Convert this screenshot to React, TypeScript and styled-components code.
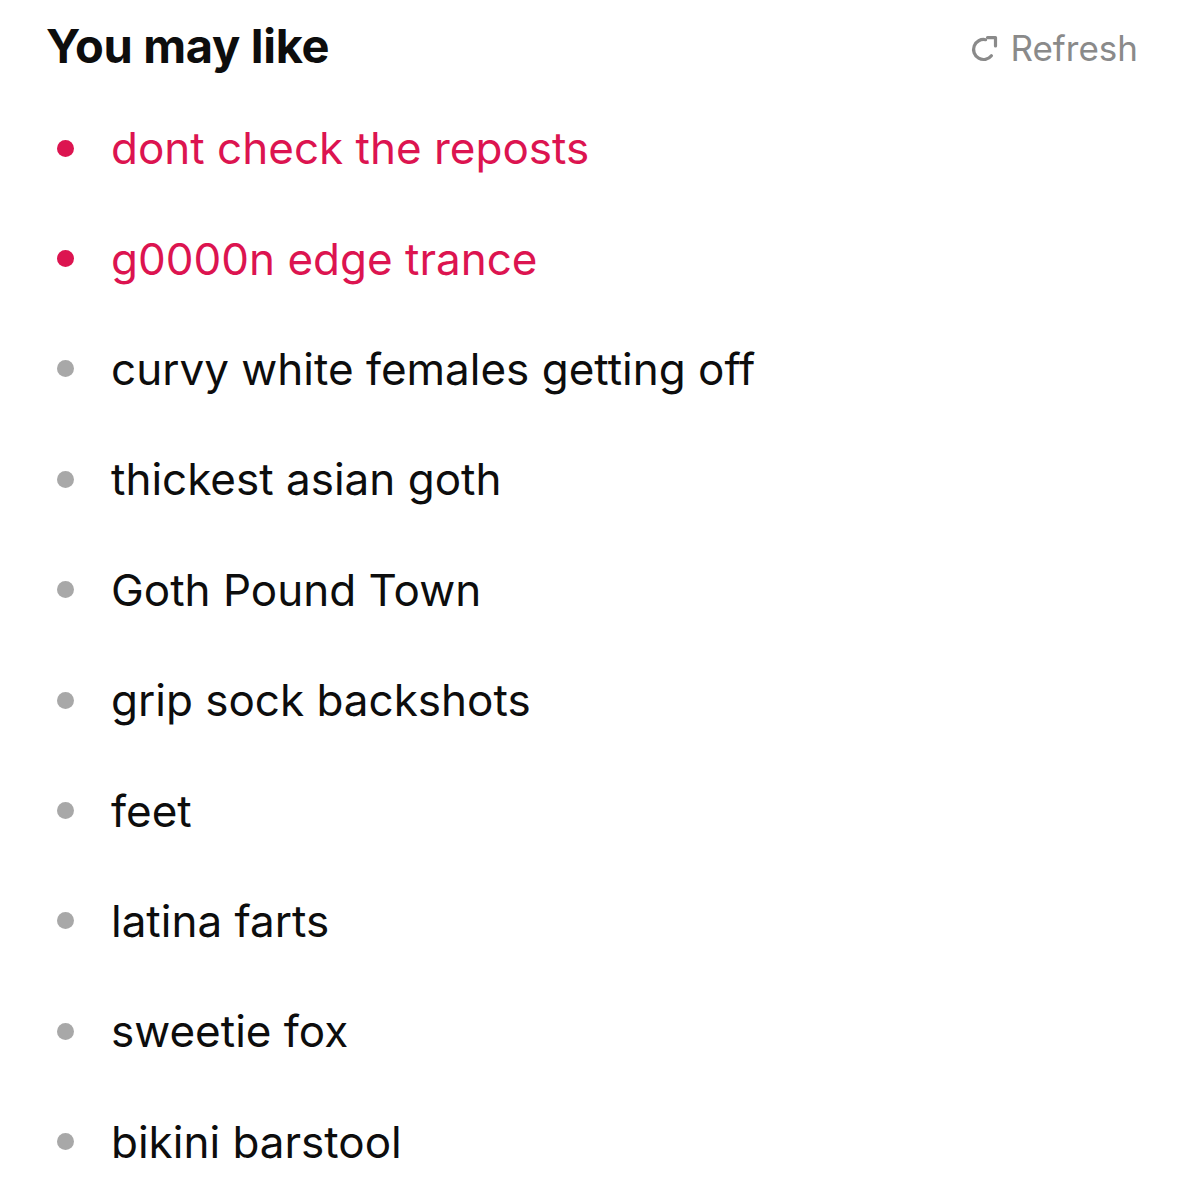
import styled, { createGlobalStyle } from 'styled-components';

const GlobalStyle = createGlobalStyle`
  body {
    margin: 0;
    background: #fff;
    font-family: Inter, "Open Sans", "Liberation Sans", sans-serif;
    -webkit-font-smoothing: antialiased;
  }
`;

const suggestions = [
  { text: 'dont check the reposts', hot: true },
  { text: 'g0000n edge trance', hot: true },
  { text: 'curvy white females getting off', hot: false },
  { text: 'thickest asian goth', hot: false },
  { text: 'Goth Pound Town', hot: false },
  { text: 'grip sock backshots', hot: false },
  { text: 'feet', hot: false },
  { text: 'latina farts', hot: false },
  { text: 'sweetie fox', hot: false },
  { text: 'bikini barstool', hot: false },
];

const App = () => {
  return (
    <>
      <GlobalStyle />
      <Container>
        <Header>
          <h2 className="title">You may like</h2>
          <RefreshButton type="button">
            <svg width="28" height="28" viewBox="0 0 28 28" fill="none">
              <path
                d="M21.4 20.7A10 10 0 1 1 15.6 4.7"
                stroke="currentColor"
                strokeWidth="3.2"
                strokeLinecap="round"
              />
              <path
                d="M17.5 2.6h8v8.4"
                stroke="currentColor"
                strokeWidth="3.2"
                strokeLinecap="round"
                strokeLinejoin="round"
              />
            </svg>
            Refresh
          </RefreshButton>
        </Header>
        <List>
          {suggestions.map(item => (
            <Item key={item.text} hot={item.hot}>
              <Dot hot={item.hot} />
              <span>{item.text}</span>
            </Item>
          ))}
        </List>
      </Container>
    </>
  );
};

export default App;

const Container = styled.div`
  width: 1185px;
  height: 1200px;
  overflow: hidden;
  background: #fff;
`;

const Header = styled.div`
  display: flex;
  align-items: center;
  justify-content: space-between;
  padding: 17px 47px 0 46px;
  height: 56px;
  .title {
    margin: 0;
    font-size: 47px;
    font-weight: 700;
    color: #0d0d0d;
    letter-spacing: -0.3px;
  }
`;

const RefreshButton = styled.button`
  display: flex;
  align-items: center;
  gap: 12px;
  background: none;
  border: none;
  padding: 0;
  font-family: inherit;
  font-size: 35px;
  color: #8a8a8a;
  margin-top: 6px;
  svg {
    margin-top: 2px;
  }
`;

const List = styled.ul`
  list-style: none;
  margin: 0;
  padding: 20px 0 0 57px;
`;

const Item = styled.li<{ hot: boolean }>`
  display: flex;
  align-items: center;
  gap: 37px;
  height: 110.4px;
  font-size: 44px;
  color: ${props => (props.hot ? '#dc1450' : '#0d0d0d')};
`;

const Dot = styled.span<{ hot: boolean }>`
  width: 17px;
  height: 17px;
  border-radius: 50%;
  flex-shrink: 0;
  background-color: ${props => (props.hot ? '#dc1450' : '#a8a8a8')};
`;
